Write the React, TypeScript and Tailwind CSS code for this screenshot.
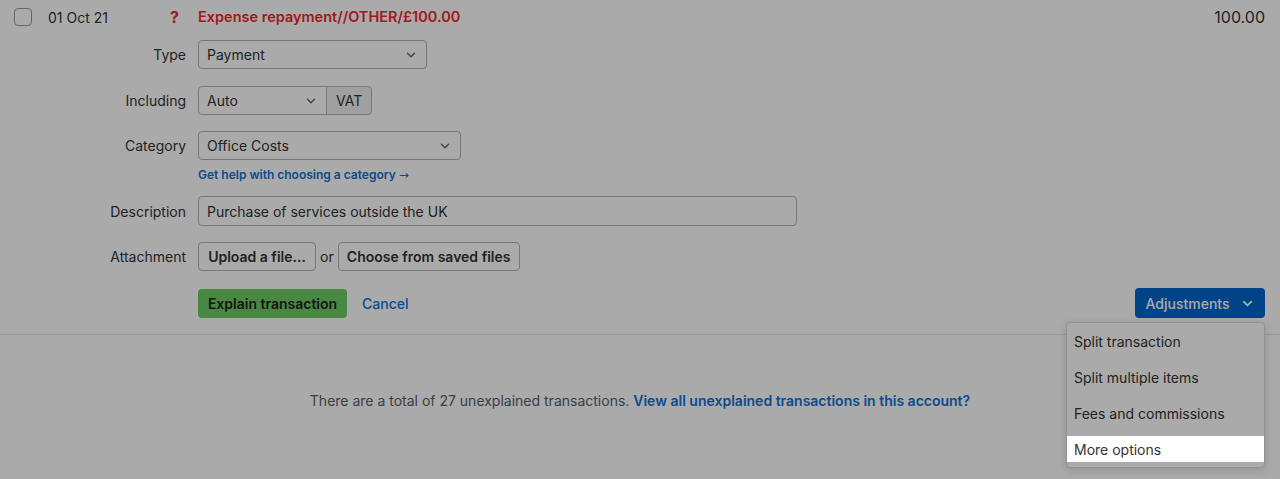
import { ChevronDown } from 'lucide-react';

const MENU = ['Split transaction', 'Split multiple items', 'Fees and commissions', 'More options'];

function Select({ value, width }: { value: string; width: string }) {
  return (
    <div className={`flex h-[29px] items-center justify-between rounded-[4px] border border-[#b4b4b4] bg-white pl-[8px] pr-[8px] ${width}`}>
      <span>{value}</span>
      <ChevronDown size={14} strokeWidth={2.5} className="text-[#666]" />
    </div>
  );
}

function Row({ label, children, className = '' }: { label: string; children: React.ReactNode; className?: string }) {
  return (
    <div className={`flex items-center ${className}`}>
      <div className="w-[186px] text-right">{label}</div>
      <div className="ml-[12px] flex items-center">{children}</div>
    </div>
  );
}

export default function App() {
  return (
    <div className="relative min-h-[479px] bg-white font-['Inter',sans-serif] text-[14px] text-[#333]">
      <div className="flex h-[34px] items-center pl-[14px] pr-[15px]">
        <div className="h-[18px] w-[18px] rounded-[4px] border border-[#9a9a9a] bg-white" />
        <span className="ml-[16px] w-[122px]">01 Oct 21</span>
        <span className="w-[28px] text-[16px] font-bold text-[#f0282a]">?</span>
        <span className="text-[14.5px] font-semibold text-[#f0282a]">Expense repayment//OTHER/£100.00</span>
        <span className="ml-auto text-[16px]">100.00</span>
      </div>

      <div className="border-b border-[#e2e2e2] pb-[16px]">
        <Row label="Type" className="mt-[6px]">
          <Select value="Payment" width="w-[229px]" />
        </Row>
        <Row label="Including" className="mt-[17px]">
          <Select value="Auto" width="w-[129px] rounded-r-none" />
          <div className="-ml-px flex h-[29px] items-center rounded-r-[4px] border border-[#b4b4b4] bg-[#f0f0f0] px-[9px]">VAT</div>
        </Row>
        <Row label="Category" className="mt-[16px]">
          <Select value="Office Costs" width="w-[263px]" />
        </Row>
        <div className="ml-[198px] mt-[7px] text-[12px] font-semibold leading-[16px] text-[#0f72d8]">
          Get help with choosing a category <span className="font-['DejaVu_Sans',sans-serif] font-normal">→</span>
        </div>
        <Row label="Description" className="mt-[13px]">
          <div className="flex h-[30px] w-[599px] items-center rounded-[4px] border border-[#b4b4b4] bg-white px-[8px]">
            Purchase of services outside the UK
          </div>
        </Row>
        <Row label="Attachment" className="mt-[16px]">
          <button className="h-[29px] w-[118px] rounded-[4px] border border-[#b4b4b4] bg-white font-semibold">Upload a file…</button>
          <span className="mx-[4px]">or</span>
          <button className="h-[29px] w-[182px] rounded-[4px] border border-[#b4b4b4] bg-white font-semibold">Choose from saved files</button>
        </Row>
        <div className="relative mt-[17px] flex items-center pl-[198px] pr-[15px]">
          <button className="h-[29px] w-[149px] rounded-[4px] bg-[#6ccc63] font-semibold text-[#222]">Explain transaction</button>
          <span className="ml-[15px] font-medium text-[#0f72d8]">Cancel</span>
          <div className="relative ml-auto">
            <button className="flex h-[30px] w-[130px] items-center justify-center gap-[10px] rounded-[4px] bg-[#0066cc] font-medium text-white">
              Adjustments
              <ChevronDown size={15} strokeWidth={3} />
            </button>
            <div className="absolute right-0 top-[34px] w-[199px] rounded-[4px] border border-[#dcdcdc] bg-white py-[5px] shadow-[0_2px_8px_rgba(0,0,0,0.15)]">
              <div className="flex flex-col gap-[10px]">
                {MENU.map((item, i) => (
                  <div
                    key={item}
                    className={`flex h-[26px] items-center px-[7px] ${i === MENU.length - 1 ? 'relative z-20 bg-white' : ''}`}
                  >
                    {item}
                  </div>
                ))}
              </div>
            </div>
          </div>
        </div>
      </div>

      <div className="pt-[58px] text-center leading-[16px] text-[#57606c]">
        There are a total of 27 unexplained transactions.{' '}
        <span className="font-semibold text-[#0f72d8]">View all unexplained transactions in this account?</span>
      </div>

      <div className="absolute inset-0 z-10 bg-black/[0.333]" />
    </div>
  );
}
